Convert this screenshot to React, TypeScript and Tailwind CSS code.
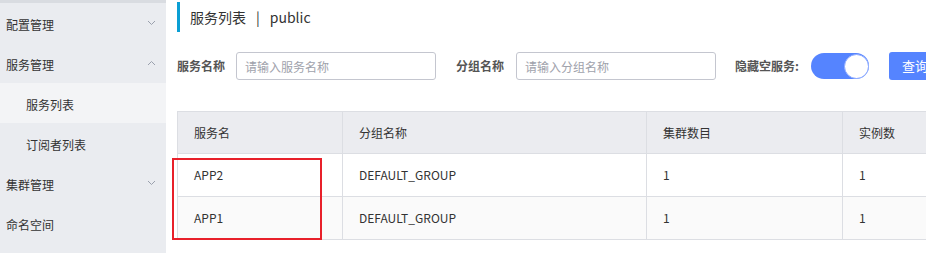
import React from 'react';

const font = { fontFamily: '"Noto Sans CJK SC", "Noto Sans", sans-serif' };

function Chevron({ up }: { up?: boolean }) {
  return (
    <svg width="9" height="6" viewBox="0 0 9 6" className="text-[#9aa0ad]">
      <polyline
        points={up ? '1,5 4.5,1.5 8,5' : '1,1 4.5,4.5 8,1'}
        fill="none"
        stroke="currentColor"
        strokeWidth="1"
      />
    </svg>
  );
}

const menu = [
  { label: '配置管理', arrow: 'down' },
  { label: '服务管理', arrow: 'up' },
  { label: '服务列表', sub: true, active: true },
  { label: '订阅者列表', sub: true },
  { label: '集群管理', arrow: 'down' },
  { label: '命名空间' },
];

const rows = [
  { name: 'APP2', group: 'DEFAULT_GROUP', clusters: '1', instances: '1' },
  { name: 'APP1', group: 'DEFAULT_GROUP', clusters: '1', instances: '1' },
];

export default function App() {
  return (
    <div className="flex h-[253px] w-[926px] overflow-hidden bg-white text-[#333]" style={font}>
      <div className="flex w-[166px] shrink-0 flex-col bg-[#eaecf0]">
        <div className="h-[3px] bg-[#d9dce1]" />
        {menu.map((m, i) => (
          <div
            key={i}
            className={`flex h-10 items-center justify-between pr-[10px] text-[12px] ${m.sub ? 'pl-[26px]' : 'pl-[6px]'} ${m.active ? 'bg-[#f3f4f6]' : ''}`}
          >
            <span className="pt-[3px]">{m.label}</span>
            {m.arrow && <Chevron up={m.arrow === 'up'} />}
          </div>
        ))}
      </div>

      <div className="relative min-w-0 flex-1 overflow-hidden pl-[11px] pt-[2px]">
        <div className="flex h-[30px] items-center border-l-[3px] border-[#0b9fd4] pl-[10px] text-[14px]">
          服务列表 <span className="mx-[10px]">|</span> public
        </div>

        <div className="mt-[20px] flex h-[28px] w-max items-center whitespace-nowrap text-[12px]">
          <span className="font-bold text-[#555]">服务名称</span>
          <input
            className="ml-[11px] h-[28px] w-[200px] rounded-[3px] border border-[#c4c6cf] px-[8px] text-[12px] outline-none placeholder:text-[#a0a2ab]"
            placeholder="请输入服务名称"
          />
          <span className="ml-[20px] font-bold text-[#555]">分组名称</span>
          <input
            className="ml-[12px] h-[28px] w-[200px] rounded-[3px] border border-[#c4c6cf] px-[8px] text-[12px] outline-none placeholder:text-[#a0a2ab]"
            placeholder="请输入分组名称"
          />
          <span className="ml-[19px] font-bold text-[#555]">隐藏空服务:</span>
          <div className="ml-[12px] flex h-[26px] w-[58px] shrink-0 items-center justify-end rounded-full bg-[#5584ff]">
            <div className="h-[25px] w-[25px] rounded-full border border-[#8eabff] bg-white" />
          </div>
          <button className="ml-[20px] h-[28px] shrink-0 rounded-[3px] bg-[#5584ff] px-[13px] text-[13px] text-white">
            查询
          </button>
        </div>

        <table className="mt-[31px] w-[900px] table-fixed border-collapse text-[12px]">
          <colgroup>
            <col className="w-[165px]" />
            <col className="w-[304px]" />
            <col className="w-[196px]" />
            <col />
          </colgroup>
          <thead>
            <tr className="h-[42px] bg-[#ebecf0]">
              {['服务名', '分组名称', '集群数目', '实例数'].map(h => (
                <th key={h} className="border border-[#dcdee3] pl-[16px] text-left font-normal">
                  {h}
                </th>
              ))}
            </tr>
          </thead>
          <tbody>
            {rows.map((r, i) => (
              <tr key={i} className={`h-[43px] ${i % 2 ? 'bg-[#fafafa]' : 'bg-white'}`}>
                <td className="border border-[#dcdee3] pl-[16px]">{r.name}</td>
                <td className="border border-[#dcdee3] pl-[16px]">{r.group}</td>
                <td className="border border-[#dcdee3] pl-[16px]">{r.clusters}</td>
                <td className="border border-[#dcdee3] pl-[16px]">{r.instances}</td>
              </tr>
            ))}
          </tbody>
        </table>

        {/* annotation box */}
        <div className="pointer-events-none absolute left-[6px] top-[158px] h-[82px] w-[150px] border-2 border-[#e8202a]" />
      </div>
    </div>
  );
}
